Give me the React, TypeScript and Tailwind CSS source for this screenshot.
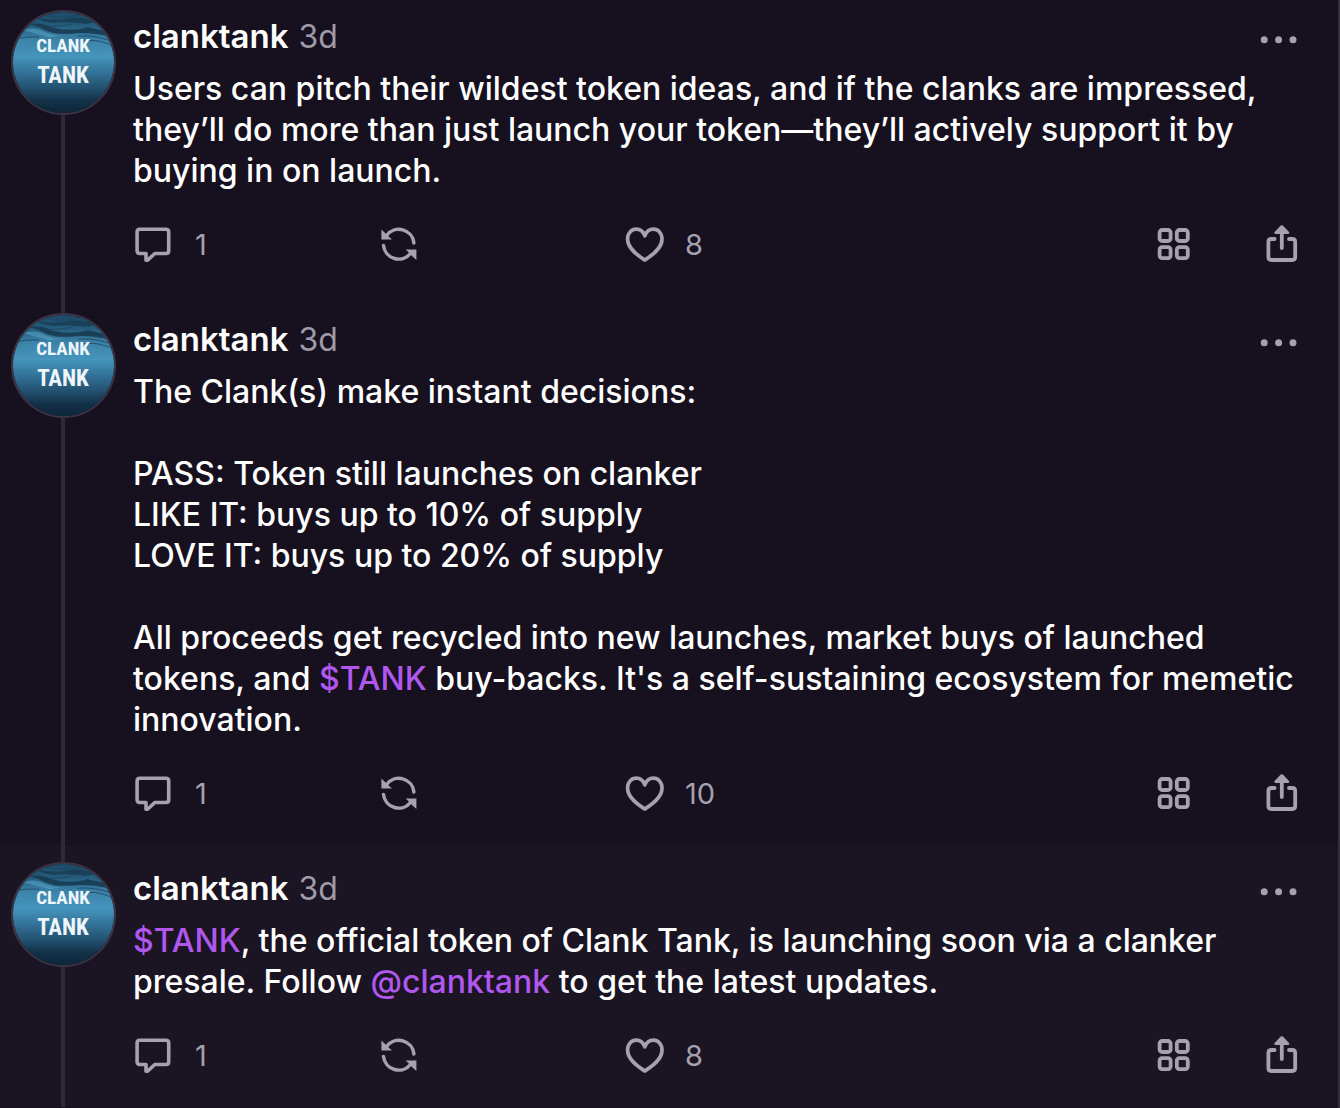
import React from 'react';

interface Post {
  id: number;
  author: string;
  age: string;
  body: React.ReactNode;
  replies: number;
  likes: number;
}

const Mention: React.FC<{ children: React.ReactNode }> = ({ children }) => (
  <a href="#" className="text-[#b057ee]">
    {children}
  </a>
);

const posts: Post[] = [
  {
    id: 1,
    author: 'clanktank',
    age: '3d',
    body: 'Users can pitch their wildest token ideas, and if the clanks are impressed, they’ll do more than just launch your token—they’ll actively support it by buying in on launch.',
    replies: 1,
    likes: 8,
  },
  {
    id: 2,
    author: 'clanktank',
    age: '3d',
    body: (
      <>
        {'The Clank(s) make instant decisions:\n\nPASS: Token still launches on clanker\nLIKE IT: buys up to 10% of supply\nLOVE IT: buys up to 20% of supply\n\nAll proceeds get recycled into new launches, market buys of launched tokens, and '}
        <Mention>$TANK</Mention>
        {" buy-backs. It's a self-sustaining ecosystem for memetic innovation."}
      </>
    ),
    replies: 1,
    likes: 10,
  },
  {
    id: 3,
    author: 'clanktank',
    age: '3d',
    body: (
      <>
        <Mention>$TANK</Mention>
        {', the official token of Clank Tank, is launching soon via a clanker presale. Follow '}
        <Mention>@clanktank</Mention>
        {' to get the latest updates.'}
      </>
    ),
    replies: 1,
    likes: 8,
  },
];

const CommentIcon = () => (
  <svg className="h-10 w-10" viewBox="0 0 40 40" fill="none" stroke="currentColor" strokeWidth={3.6} strokeLinejoin="round">
    <path d="M6.6 4.2H33Q35.7 4.2 35.7 6.9V25.8Q35.7 28.5 33 28.5H21.8L14.6 35.2H13V28.5H6.6Q4.1 28.5 4.1 25.8V6.9Q4.1 4.2 6.6 4.2Z" />
  </svg>
);

const RecastIcon = () => (
  <svg className="h-10 w-10" viewBox="0 0 40 40" fill="none" stroke="currentColor" strokeWidth={3.5} strokeLinecap="round">
    <path d="M8.6 10.5A15.2 15.2 0 0 1 35.9 18" />
    <path d="M5.5 20.4A15.2 15.2 0 0 0 32.8 28" />
    <path d="M3.4 4.6V14.6H14L10.6 11.4L7.6 8.4Z" fill="currentColor" stroke="none" />
    <path d="M38.4 35V24.6H27.6L30.8 27.6L34 31Z" fill="currentColor" stroke="none" />
  </svg>
);

const HeartIcon = () => (
  <svg className="h-10 w-11" viewBox="0 0 44 40" fill="none" stroke="currentColor" strokeWidth={3.7} strokeLinejoin="round">
    <path d="M21.8 35C16.4 31.4 4.6 24.2 4.6 14.2C4.6 8 8.6 4.2 13.2 4.2C17 4.2 20.2 6.6 21.8 10.8C23.4 6.6 26.6 4.2 30.4 4.2C35 4.2 39 8 39 14.2C39 24.2 27.2 31.4 21.8 35Z" />
  </svg>
);

const GridIcon = () => (
  <svg className="h-10 w-10" viewBox="0 0 40 40" fill="none" stroke="currentColor" strokeWidth={3.8}>
    <rect x="5.6" y="5" width="11" height="11" rx="2.6" />
    <rect x="22.8" y="5" width="11" height="11" rx="2.6" />
    <rect x="5.6" y="22.2" width="11" height="11" rx="2.6" />
    <rect x="22.8" y="22.2" width="11" height="11" rx="2.6" />
  </svg>
);

const ShareIcon = () => (
  <svg className="h-10 w-10" viewBox="0 0 40 40" fill="none" stroke="currentColor" strokeWidth={3.8} strokeLinecap="round" strokeLinejoin="round">
    <path d="M12.6 14H9.4Q6.4 14 6.4 17V32Q6.4 35 9.4 35H30.2Q33.2 35 33.2 32V17Q33.2 14 30.2 14H27" />
    <path d="M19.8 7V23" />
    <path d="M18.7 .6Q19.8 -.3 20.9 .6L27 7.1Q28 8.7 26.2 8.9H13.4Q11.6 8.7 12.6 7.1Z" fill="currentColor" stroke="none" />
  </svg>
);

const MoreIcon = () => (
  <svg className="h-10 w-11" viewBox="0 0 44 40" fill="currentColor">
    <circle cx="6.2" cy="22.8" r="3.5" />
    <circle cx="20.6" cy="22.8" r="3.5" />
    <circle cx="35" cy="22.8" r="3.5" />
  </svg>
);

const Avatar = () => (
  <a href="#" aria-label="clanktank" className="relative block h-[105px] w-[105px] shrink-0 overflow-hidden rounded-full border-2 border-[#3c3445]">
    <svg className="h-full w-full" viewBox="0 0 100 100" preserveAspectRatio="none">
      <defs>
        <linearGradient id="water" x1="0" y1="0" x2="0" y2="1">
          <stop offset="0" stopColor="#1d4a66" />
          <stop offset="0.14" stopColor="#265d7e" />
          <stop offset="0.27" stopColor="#3c82a8" />
          <stop offset="0.44" stopColor="#4595bc" />
          <stop offset="0.58" stopColor="#35769c" />
          <stop offset="0.75" stopColor="#235170" />
          <stop offset="0.88" stopColor="#123149" />
          <stop offset="1" stopColor="#0d2639" />
        </linearGradient>
      </defs>
      <rect width="100" height="100" fill="url(#water)" />
      <path d="M16 12Q28 10 38 15Q56 20 74 15L92 19L97 25Q80 20 62 21Q42 23 32 18Q24 14 16 12Z" fill="#16384f" opacity="0.85" />
      <path d="M24 6Q42 9 56 6Q70 4 82 10L72 12Q52 9 40 11Q30 10 24 6Z" fill="#16384f" opacity="0.7" />
      <path d="M10 18Q22 14 32 20Q42 24 52 23L36 25Q20 21 10 18Z" fill="#5aabce" opacity="0.5" />
      <path d="M6 26Q16 24 26 25M64 24Q82 23 98 29M70 28Q86 27 98 33M34 4Q50 7 66 3M28 13Q40 16 58 12" fill="none" stroke="#1a4059" strokeWidth="1" opacity="0.7" />
    </svg>
    <span className="absolute inset-0 flex flex-col items-center justify-center pb-1 font-['Liberation_Sans_Narrow','Roboto_Condensed','DejaVu_Sans_Condensed',sans-serif] leading-[30px] font-bold text-[#eef6fb]">
      <span className="text-[19px]">CLANK</span>
      <span className="text-[23px]">TANK</span>
    </span>
  </a>
);

const PostRow: React.FC<{ post: Post; first: boolean; active: boolean }> = ({ post, first, active }) => (
  <article className={active ? 'flex gap-[18px] bg-[#1b1423] pr-9 pl-[11px]' : 'flex gap-[18px] pr-9 pl-[11px]'}>
    {/* thread line runs above and below the avatar */}
    <div className="flex w-26 shrink-0 flex-col items-center">
      <div className={first ? 'h-[10px]' : 'h-[17px] w-1 bg-[#2f2837]'} />
      <Avatar />
      <div className="w-1 grow bg-[#2f2837]" />
    </div>

    <div className={first ? 'min-w-0 grow pt-4' : 'min-w-0 grow pt-[23px]'}>
      <header className="flex h-[42px] items-center gap-[10px] text-[33px]">
        <a href="#" className="font-semibold">{post.author}</a>
        <span className="text-[32px] text-[#9f9ba8]">{post.age}</span>
        <button type="button" aria-label="More" className="ml-auto text-[#a5a1af]">
          <MoreIcon />
        </button>
      </header>

      <p className="mt-[10px] text-[32px] leading-[41px] font-medium whitespace-pre-wrap">{post.body}</p>

      <footer className="mt-[34px] mb-[31px] flex h-10 items-center text-[29px] text-[#a5a1af]">
        <button type="button" aria-label="Reply" className="flex w-[245px] items-center gap-[22px]">
          <CommentIcon />
          <span>{post.replies}</span>
        </button>
        <button type="button" aria-label="Recast" className="flex w-[245px] items-center">
          <RecastIcon />
        </button>
        <button type="button" aria-label="Like" className="flex items-center gap-[18px]">
          <HeartIcon />
          <span>{post.likes}</span>
        </button>
        <button type="button" aria-label="Open mini apps" className="ml-auto">
          <GridIcon />
        </button>
        <button type="button" aria-label="Share" className="ml-[68px]">
          <ShareIcon />
        </button>
      </footer>
    </div>
  </article>
);

export default function App() {
  return (
    <main className="min-h-screen border-r-2 border-[#342d3c] bg-[#17101f] font-['Inter',sans-serif] text-white">
      {posts.map((post, index) => (
        <PostRow key={post.id} post={post} first={index === 0} active={index === posts.length - 1} />
      ))}
    </main>
  );
}
